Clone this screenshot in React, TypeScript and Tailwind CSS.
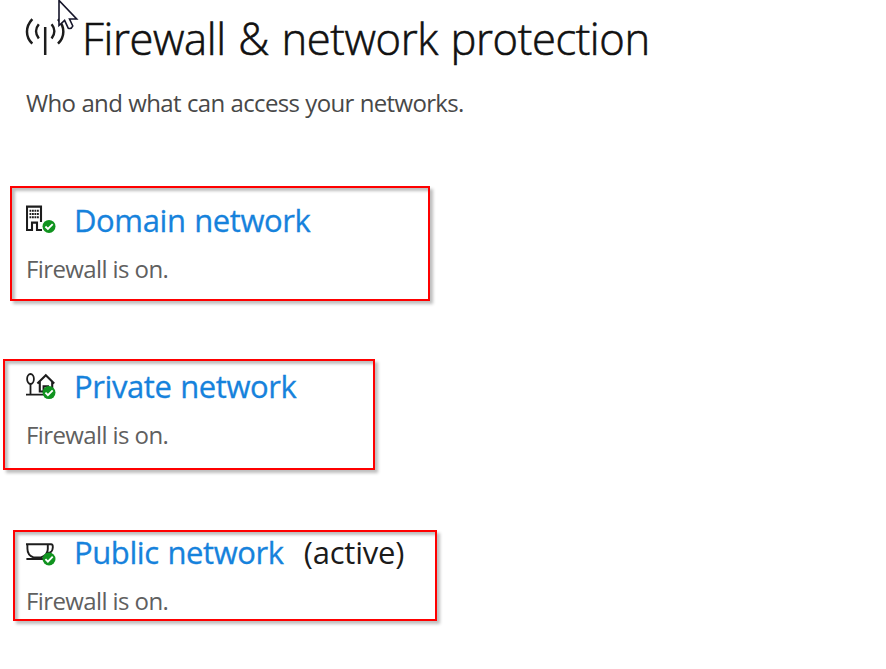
import type { ReactNode } from "react";

function AntennaIcon() {
  return (
    <svg className="block h-[44px] w-[42px]" viewBox="0 0 42 44" fill="none" stroke="#1c1c1c" strokeWidth="2.5">
      <path d="M20.2 15V43" />
      <path d="M13.8 12.2C10.2 16.5 10.2 22 13.8 26.5M26.6 12.2C30.2 16.5 30.2 22 26.6 26.5" />
      <path d="M7.3 7.2C.2 15 .2 24.5 7.3 31.7M33 7.2C40.1 15 40.1 24.5 33 31.7" />
    </svg>
  );
}

function Badge({ y }: { y: number }) {
  return (
    <g transform={`translate(23 ${y})`}>
      <circle r="6.5" fill="#10931f" stroke="none" />
      <path d="M-3.6 .1L-1.1 2.6L3.7 -2.3" fill="none" stroke="#fff" strokeWidth="1.9" />
    </g>
  );
}

function DomainIcon() {
  return (
    <svg className="block h-[32px] w-[32px]" viewBox="0 0 32 32" fill="none" stroke="#1d1d1d" strokeWidth="2.1">
      <path d="M1 27V2.6H15V18M0 26H6V18.6H11V26H16" />
      <path d="M3.5 6.8H13M3.5 10H13M3.5 13.2H13" strokeWidth="2" strokeDasharray="1.8 .7" />
      <Badge y={22.4} />
    </svg>
  );
}

function PrivateIcon() {
  return (
    <svg className="block h-[32px] w-[32px]" viewBox="0 0 32 32" fill="none" stroke="#1d1d1d" strokeWidth="1.8">
      <ellipse cx="4.5" cy="9" rx="3.4" ry="5" />
      <path d="M4.5 13V24M0 24.6H18" />
      <path d="M11.4 13.4L19.8 5.2L28.2 13.4M13.8 11.5V21.5H18M26.2 11.5V18M17.6 22V16.2H22V18" strokeWidth="2.1" />
      <Badge y={22.6} />
    </svg>
  );
}

function PublicIcon() {
  return (
    <svg className="block h-[32px] w-[32px]" viewBox="0 0 32 32" fill="none" stroke="#1d1d1d" strokeWidth="1.9">
      <path d="M0 8.2H25Q27 8.2 26.8 11.5Q26.5 17 21.5 17" />
      <path d="M1.4 8.2V12.5C1.4 17 3.5 20 7.5 21.4H15C19 20 21.8 17 21.8 13V8.2M.4 23H18" />
      <Badge y={23} />
    </svg>
  );
}

function Cursor() {
  return (
    <svg className="absolute left-[57px] top-0 h-[31px] w-[22px]" viewBox="0 0 22 31">
      <path d="M2 .4V25.5L7.6 20.4L11.2 28.2Q14.4 29.4 15.8 26L12.5 19H19.7Z" fill="#fff" stroke="#15152a" strokeWidth="1.6" />
    </svg>
  );
}

function Network({ icon, name, note, box }: { icon: ReactNode; name: string; note?: string; box: string }) {
  return (
    <section className={`border-2 border-[#ff0000] shadow-[3px_3px_3px_rgba(0,0,0,0.26),inset_3px_3px_3px_rgba(0,0,0,0.26)] ${box}`}>
      <h2 className="flex h-[40px] items-center text-[31px] leading-[40px] text-[#1b1b1b]">
        <span className="w-[48px] shrink-0">{icon}</span>
        <span className="tracking-[-0.4px] text-[#1682dc] [word-spacing:1px] [-webkit-text-stroke:0.3px_#1682dc]">{name}</span>
        {note && <span className="ml-[20px] tracking-[-0.2px]">{note}</span>}
      </h2>
      <p className="mt-[13px] text-[24px] leading-[32px] tracking-[-0.6px] text-[#606060]">Firewall is on.</p>
    </section>
  );
}

export default function App() {
  return (
    <main className="relative h-[669px] w-[886px] overflow-hidden bg-white font-['Open_Sans','Noto_Sans',sans-serif] whitespace-nowrap">
      <header className="h-[186px] pl-[25px] pt-[6px]">
        <div className="flex h-[60px] items-start">
          <div className="mt-[6px] w-[57px]"><AntennaIcon /></div>
          <h1 className="mt-[3px] text-[43.5px] leading-[60px] font-light tracking-[-0.38px] text-[#111] [word-spacing:1.7px] [-webkit-text-stroke:0.6px_#111]">Firewall &amp; network protection</h1>
        </div>
        <p className="mt-[21px] pl-px text-[24px] leading-[32px] tracking-[-0.68px] text-[#484848] [word-spacing:0.6px]">Who and what can access your networks.</p>
      </header>
      <Network icon={<DomainIcon />} name="Domain network" box="ml-[10px] h-[115px] w-[420px] pl-[14px] pt-[12px]" />
      <Network icon={<PrivateIcon />} name="Private network" box="mt-[58px] ml-[3px] h-[111px] w-[372px] pl-[21px] pt-[5px]" />
      <Network icon={<PublicIcon />} name="Public network" note="(active)" box="mt-[60px] ml-[13px] h-[91px] w-[424px] pl-[11px]" />
      <Cursor />
    </main>
  );
}
